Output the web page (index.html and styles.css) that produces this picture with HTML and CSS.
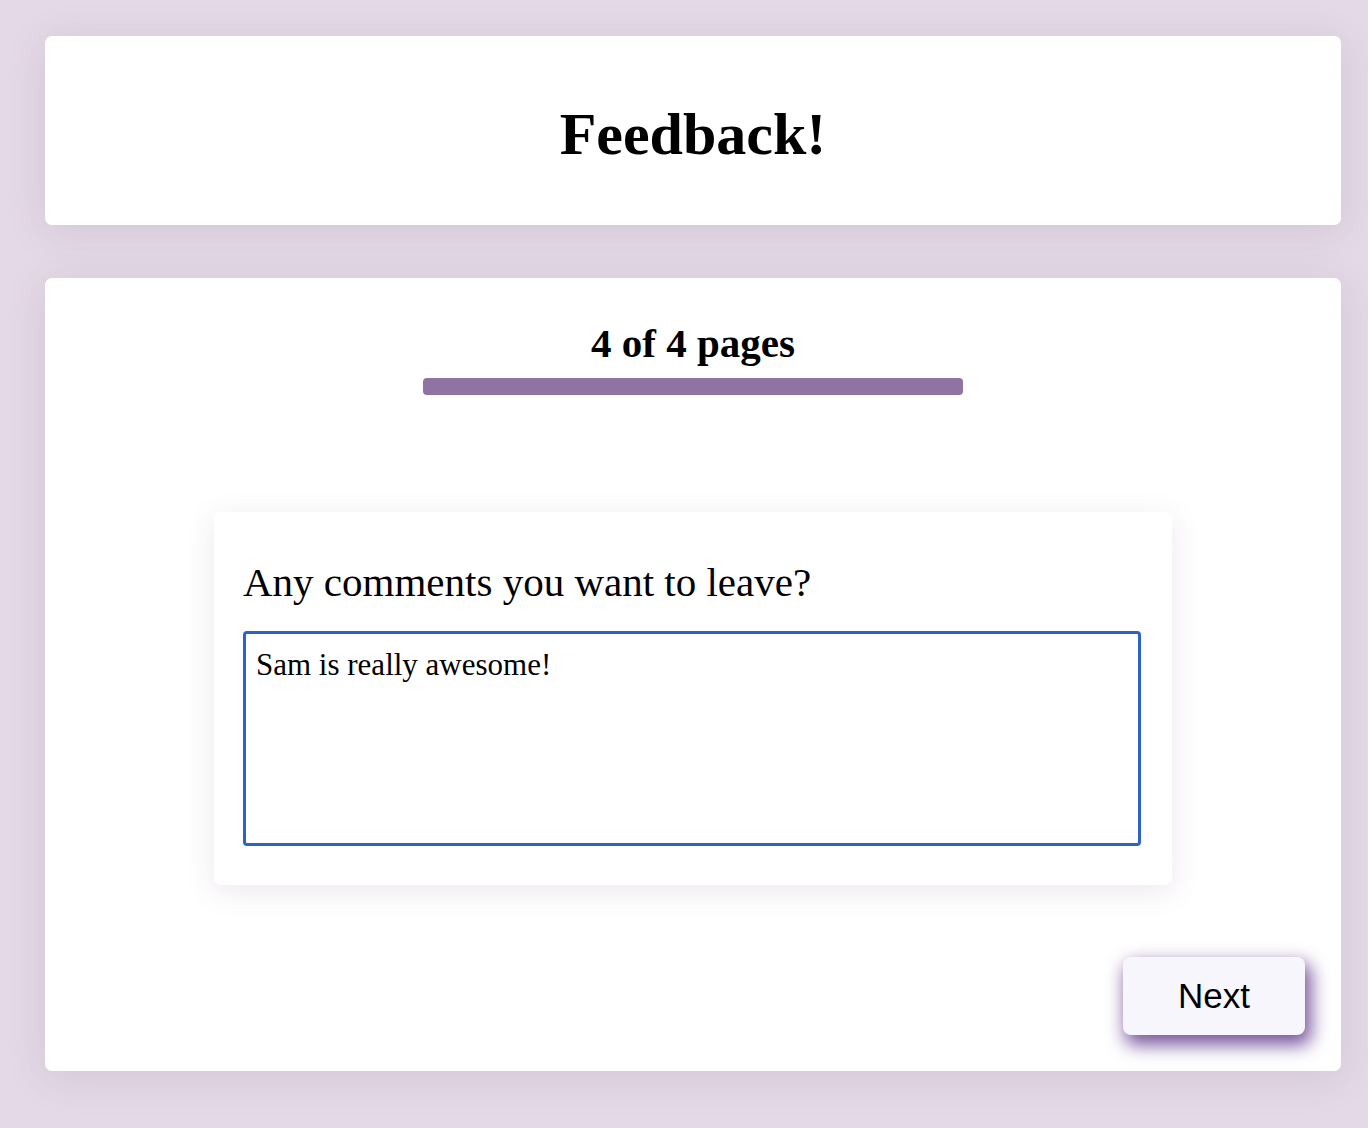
FILE: index.html
```html
<!DOCTYPE html>
<html lang="en">
<head>
<meta charset="utf-8">
<title>Feedback!</title>
<link rel="stylesheet" href="styles.css">
</head>
<body>
<div class="page">
  <header class="card header-card">
    <h1 class="title">Feedback!</h1>
  </header>
  <main class="card main-card">
    <h2 class="pages">4 of 4 pages</h2>
    <div class="progress"><div class="progress-fill"></div></div>
    <section class="question">
      <label class="question-label" for="comments">Any comments you want to leave?</label>
      <textarea id="comments" class="answer">Sam is really awesome!</textarea>
    </section>
    <div class="actions">
      <button class="next-btn" type="button">Next</button>
    </div>
  </main>
</div>
</body>
</html>
```
FILE: styles.css
```css
html, body {
  margin: 0;
  padding: 0;
}
body {
  background: #e4d9e6;
  font-family: "Liberation Serif", "Times New Roman", serif;
  color: #000;
}
.page {
  padding: 36px 27px 57px 45px;
  display: flex;
  flex-direction: column;
  gap: 53px;
}
.card {
  background: #fff;
  border-radius: 7px;
  box-shadow: 0 6px 40px rgba(90, 70, 90, 0.13);
}
.header-card {
  height: 189px;
  box-sizing: border-box;
  padding-top: 64px;
  text-align: center;
}
.title {
  margin: 0;
  font-size: 60px;
  font-weight: 700;
  line-height: normal;
}
.main-card {
  height: 793px;
  box-sizing: border-box;
  padding: 41px 36px 36px;
  display: flex;
  flex-direction: column;
  align-items: center;
}
.pages {
  margin: 0;
  font-size: 41px;
  font-weight: 700;
  line-height: normal;
}
.progress {
  margin-top: 11px;
  width: 540px;
  height: 17px;
  border-radius: 4px;
  background: #ece6f0;
  overflow: hidden;
}
.progress-fill {
  width: 100%;
  height: 100%;
  background: #8f73a3;
}
.question {
  margin-top: 117px;
  width: 958px;
  height: 373px;
  box-sizing: border-box;
  padding: 46px 31px 38px 29px;
  background: #fff;
  border-radius: 7px;
  box-shadow: 0 6px 28px rgba(140, 100, 150, 0.16);
  display: flex;
  flex-direction: column;
  gap: 25px;
}
.question-label {
  font-size: 41px;
  line-height: normal;
}
.answer {
  display: block;
  width: 100%;
  height: 215px;
  box-sizing: border-box;
  margin: 0;
  padding: 13px 10px 10px;
  border: 3px solid #2d62cb;
  border-radius: 4px;
  font-family: "Liberation Serif", "Times New Roman", serif;
  font-size: 31px;
  line-height: normal;
  color: #000;
  resize: none;
  outline: none;
}
.actions {
  margin-top: auto;
  align-self: stretch;
  display: flex;
  justify-content: flex-end;
}
.next-btn {
  width: 182px;
  height: 78px;
  border: none;
  border-radius: 8px;
  background: #f8f6fd;
  font-family: "Liberation Sans", Arial, sans-serif;
  font-size: 35px;
  color: #000;
  box-shadow: 4px 8px 18px 2px rgba(95, 55, 140, 0.85);
  cursor: pointer;
}
```
